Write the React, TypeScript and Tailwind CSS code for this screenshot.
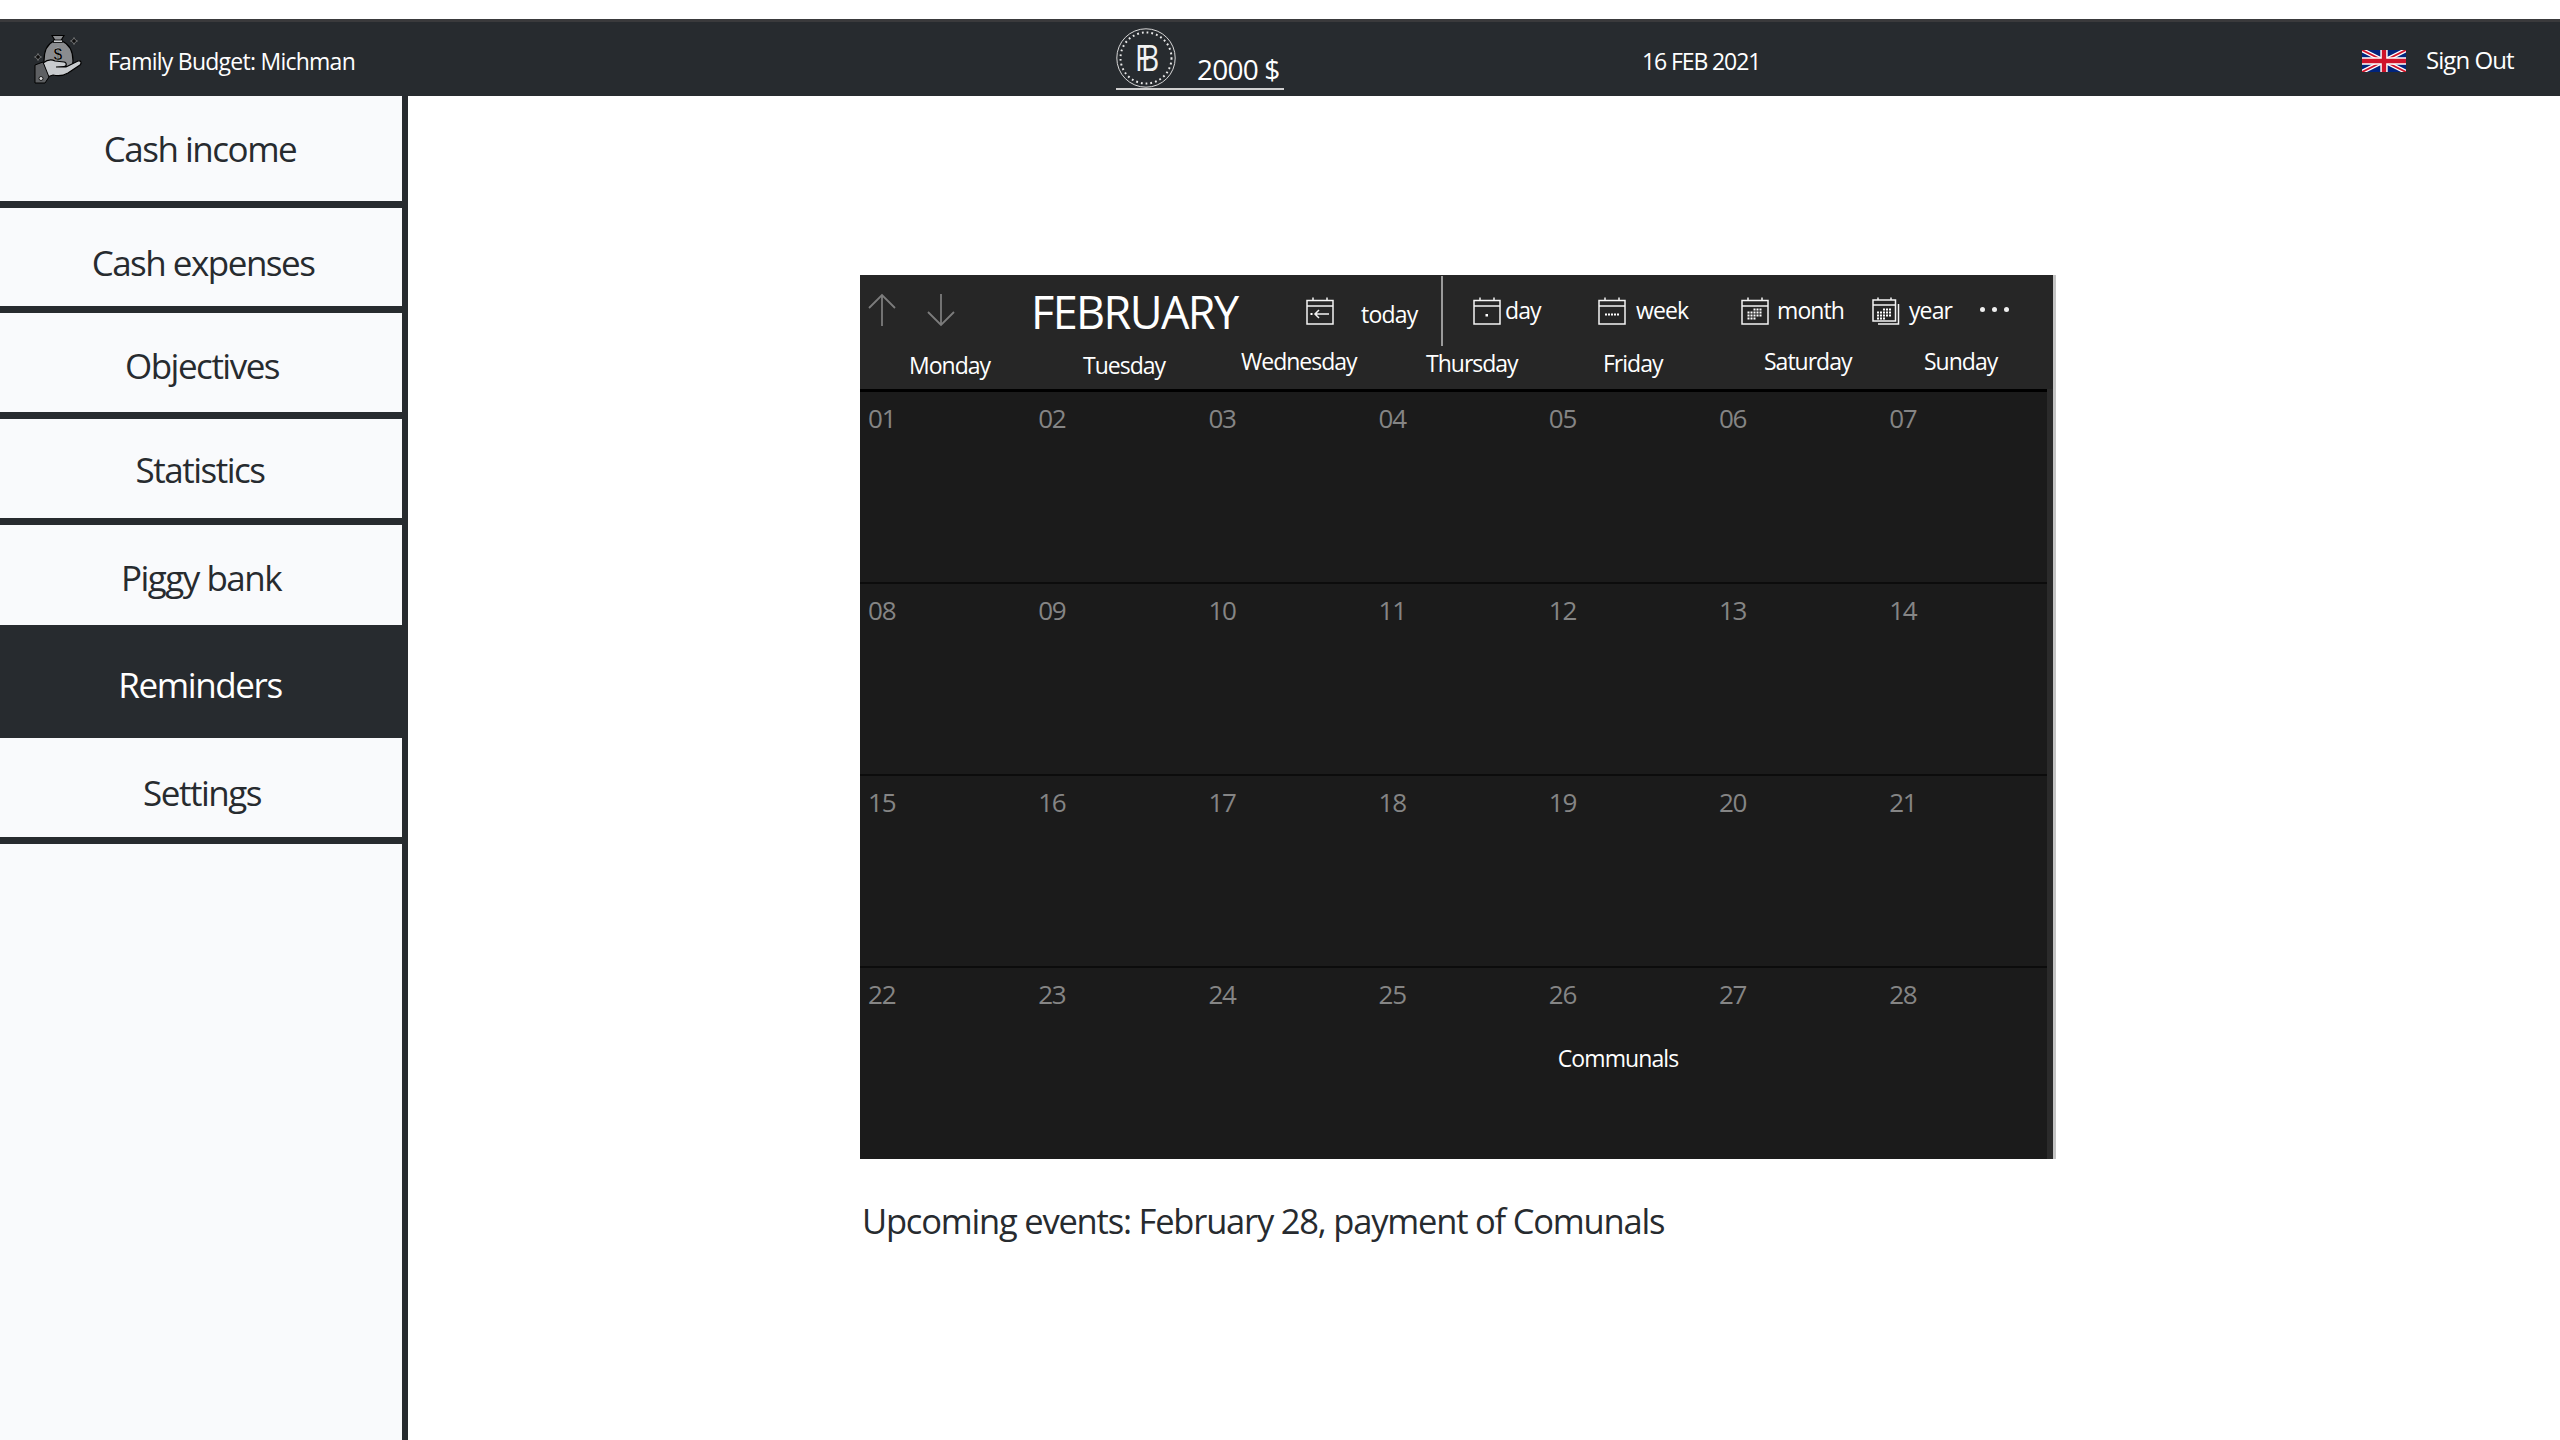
import React from "react";

const FONT = "font-['Open_Sans','Noto_Sans',sans-serif]";

function BagLogo() {
  return (
    <svg width="50" height="50" viewBox="0 0 50 50" className="shrink-0">
      <path d="M19 .5h12l-3 5h-6z" fill="#8a8c8f" stroke="#000" strokeWidth="1.200" />
      <path d="M21 6C12 10 11 20 11 26c0 5 3 8 7 8h16c4 0 6-4 6-8 0-7-2-16-11-20z" fill="#8a8c8f" stroke="#000" strokeWidth="1.200" />
      <rect x="20.500" y="5" width="9" height="2.500" fill="#c9cbce" stroke="#000" strokeWidth=".8" />
      <text x="25" y="25" textAnchor="middle" fontSize="16" fontWeight="700" fill="#000" stroke="#ddd" strokeWidth=".3" fontFamily="'Liberation Sans',sans-serif">$</text>
      <path d="M10 28C14 25 18 24 22 26L31 27C34 27.500 34 31.500 31 31.500L23 32 33 32 45 26C48 25 49 28 47 30L35 38C30 41 24 41 20 40L14 42Z" fill="#c8cbce" stroke="#000" strokeWidth="1.200" />
      <path d="M2 30L10 27 16 42 12 48H2Z" fill="#5e6063" stroke="#000" strokeWidth="1" />
      <circle cx="8" cy="43.500" r="2" fill="#ddd" stroke="#000" strokeWidth=".8" />
      <path d="M5 18.500l1.200 2.300 2.300 1.200-2.300 1.200L5 25.500l-1.200-2.300-2.300-1.200 2.300-1.200z" fill="#0d0d0d" stroke="#bbb" strokeWidth=".5" />
      <path d="M41 2.500l1.200 2.300 2.300 1.200-2.300 1.200L41 9.500l-1.200-2.300-2.300-1.200 2.300-1.200z" fill="#0d0d0d" stroke="#bbb" strokeWidth=".5" />
    </svg>
  );
}

function Coin() {
  return (
    <svg width="60" height="60" viewBox="0 0 60 60" className="shrink-0">
      <circle cx="30" cy="30" r="29.200" fill="none" stroke="#d8d8d8" strokeWidth="1" />
      <circle cx="30" cy="30" r="25.500" fill="none" stroke="#e8e8e8" strokeWidth="2" strokeDasharray="1.800 3" />
      <text transform="translate(19 43) scale(.78 1)" fontSize="36" letterSpacing="-11" fill="#f2f2f2" fontFamily="'Open Sans',sans-serif">FB</text>
    </svg>
  );
}

function Flag() {
  return (
    <svg width="44" height="22" viewBox="0 0 60 30" preserveAspectRatio="none" className="shrink-0">
      <rect width="60" height="30" fill="#00247d" />
      <path d="M0 0L60 30M60 0L0 30" stroke="#fff" strokeWidth="6" />
      <path d="M0 0L60 30M60 0L0 30" stroke="#cf142b" strokeWidth="2.500" />
      <path d="M30 0V30M0 15H60" stroke="#fff" strokeWidth="10" />
      <path d="M30 0V30M0 15H60" stroke="#cf142b" strokeWidth="6" />
    </svg>
  );
}

function CalIcon({ kind }: { kind: "today" | "day" | "week" | "month" | "year" }) {
  const dots: React.ReactNode[] = [];
  if (kind === "week") {
    for (let i = 0; i < 5; i++) dots.push(<rect key={i} x={7 + i * 3} y={16.500} width="2" height="2" fill="#fff" />);
  }
  if (kind === "month" || kind === "year") {
    const ox = kind === "month" ? 6.500 : 5;
    for (let r = 0; r < 4; r++)
      for (let c = 0; c < 5; c++) {
        if ((r === 0 && c < 2) || (r === 3 && c > 2)) continue;
        dots.push(<rect key={`${r}-${c}`} x={ox + c * 3} y={11.500 + r * 3} width="2" height="2" fill="#fff" />);
      }
  }
  return (
    <svg width="28" height="28" viewBox="0 0 28 28" fill="none" stroke="#f4f4f4" strokeWidth="1.500" className="shrink-0">
      {kind === "year" ? (
        <>
          <rect x="1" y="3" width="22.500" height="21" />
          <path d="M6 3V.500M19 3V.500M1 8h22.500" />
          <path d="M26.500 7v20H6" />
        </>
      ) : (
        <>
          <rect x="1" y="3.500" width="26" height="23.500" />
          <path d="M7 3.500V.500M21 3.500V.500M1 9h26" />
        </>
      )}
      {kind === "today" && (
        <>
          <path d="M9 17h14M13 13l-4 4 4 4" />
          <rect x="4.500" y="16" width="2" height="2" fill="#fff" stroke="none" />
        </>
      )}
      {kind === "day" && <rect x="12.500" y="17" width="2.500" height="2.500" fill="#fff" stroke="none" />}
      <g stroke="none">{dots}</g>
    </svg>
  );
}

const MENU = [
  { label: "Cash income", box: "h-[112px] pt-[2px] border-b-[7px]", text: "ml-[-2px]" },
  { label: "Cash expenses", box: "h-[105px] pt-[13px] border-b-[7px]", text: "ml-[4px]" },
  { label: "Objectives", box: "h-[106px] pt-[8px] border-b-[7px]", text: "ml-[2px]" },
  { label: "Statistics", box: "h-[106px] pt-[4px] border-b-[7px]", text: "ml-[-2px]" },
  { label: "Piggy bank", box: "h-[100px] pt-[6px]", text: "ml-0" },
  { label: "Settings", box: "h-[106px] pt-[11px] border-b-[7px]", text: "ml-[2px]" },
];

const DAYS = [
  { n: "Monday", box: "w-[174px] pt-[4px]" },
  { n: "Tuesday", box: "w-[158px] pt-[4px]" },
  { n: "Wednesday", box: "w-[185px] pt-0" },
  { n: "Thursday", box: "w-[177px] pt-[2px]" },
  { n: "Friday", box: "w-[161px] pt-[2px]" },
  { n: "Saturday", box: "w-[160px] pt-0" },
  { n: "Sunday", box: "w-[76px] pt-0" },
];

const WEEKS = [
  ["01", "02", "03", "04", "05", "06", "07"],
  ["08", "09", "10", "11", "12", "13", "14"],
  ["15", "16", "17", "18", "19", "20", "21"],
  ["22", "23", "24", "25", "26", "27", "28"],
];

function MenuItem({ m }: { m: (typeof MENU)[number] }) {
  return (
    <div className={`${m.box} flex items-center justify-center border-[#272b2f] bg-[#f9fafc]`}>
      <span className={`${m.text} text-[35px] tracking-[-1.5px] text-[#272b2f]`}>{m.label}</span>
    </div>
  );
}

export default function App() {
  return (
    <div className={`${FONT} h-screen w-full overflow-hidden bg-white pt-[19px]`}>
      <header className="flex h-[77px] items-center border-t-[3px] border-[#3a3a3c] bg-[#272b2f] text-white">
        <div className="flex w-[1116px] items-center pl-[33px]">
          <div className="mt-[2px]"><BagLogo /></div>
          <span className="ml-[25px] mt-[5px] text-[23px] tracking-[-0.75px]">Family Budget: Michman</span>
        </div>
        <div className="flex h-[62px] w-[168px] items-start border-b-2 border-[#cfcfcf]">
          <Coin />
          <span className="ml-[21px] mt-[22px] text-[28px] leading-[38px] tracking-[-0.8px]">2000 $</span>
        </div>
        <div className="w-[358px]" />
        <span className="mt-[5px] w-[720px] text-[23px] tracking-[-1.1px]">16 FEB 2021</span>
        <div className="mt-[2px] flex items-center">
          <div className="mt-[2px]"><Flag /></div>
          <span className="ml-[20px] text-[24px] tracking-[-0.95px]">Sign Out</span>
        </div>
      </header>

      <div className="flex h-[1344px]">
        <aside className="h-full w-[408px] shrink-0 border-r-[6px] border-[#272b2f] bg-[#f9fafc]">
          {MENU.slice(0, 5).map((m) => (
            <MenuItem key={m.label} m={m} />
          ))}
          <div className="-mr-[6px] flex h-[113px] items-center justify-center bg-[#272b2f] pr-[8px] pt-[8px]">
            <span className="text-[35px] tracking-[-1.4px] text-white">Reminders</span>
          </div>
          <MenuItem m={MENU[5]} />
        </aside>

        <main className="flex-1 pl-[452px] pt-[179px]">
          <section className="w-[1196px] border-r-[3px] border-[#c4c4c4] bg-[#262626] text-white">
            <div className="flex h-[70px] items-center pl-[8px]">
              <div className="w-[58px]">
                <svg width="28" height="34" viewBox="0 0 28 34" fill="none" stroke="#7c7c7c" strokeWidth="1.800">
                  <path d="M14 33V2M1 15L14 2l13 13" />
                </svg>
              </div>
              <div className="w-[105px]">
                <svg width="30" height="34" viewBox="0 0 30 34" fill="none" stroke="#7c7c7c" strokeWidth="1.800">
                  <path d="M15 1v31M2 19l13 13 13-13" />
                </svg>
              </div>
              <div className="w-[275px] pt-[4px] text-[45px] tracking-[-1.6px]">FEBRUARY</div>
              <div className="w-[55px] pt-[2px]"><CalIcon kind="today" /></div>
              <div className="w-[80px] pt-[9px] text-[23px] tracking-[-0.8px]">today</div>
              <div className="w-[32px] self-stretch">
                <div className="mt-[1px] h-[70px] w-[2px] bg-[#9a9a9a]" />
              </div>
              <div className="w-[32px] pt-[2px]"><CalIcon kind="day" /></div>
              <div className="w-[93px] text-[23px] tracking-[-0.9px]">day</div>
              <div className="w-[38px] pt-[2px]"><CalIcon kind="week" /></div>
              <div className="w-[105px] text-[23px] tracking-[-0.9px]">week</div>
              <div className="w-[36px] pt-[2px]"><CalIcon kind="month" /></div>
              <div className="w-[95px] text-[23px] tracking-[-0.9px]">month</div>
              <div className="w-[37px] pt-[2px]"><CalIcon kind="year" /></div>
              <div className="w-[71px] text-[23px] tracking-[-0.9px]">year</div>
              <div className="flex gap-[7px] pb-[1px]">
                <span className="size-[5px] rounded-full bg-[#eee]" />
                <span className="size-[5px] rounded-full bg-[#eee]" />
                <span className="size-[5px] rounded-full bg-[#eee]" />
              </div>
            </div>
            <div className="flex h-[44px] pl-[49px]">
              {DAYS.map((d) => (
                <div key={d.n} className={`${d.box} text-[23px] leading-[32px] tracking-[-1px]`}>{d.n}</div>
              ))}
            </div>
            <div className="flex">
              <div className="w-[1187px] border-t-[3px] border-black bg-[#1b1b1b]">
                {WEEKS.map((w, i) => (
                  <div key={i} className="grid h-[192px] grid-cols-[repeat(7,170.2px)] border-b-2 border-[#0c0c0c] pl-[8px] pt-[11px] last:h-[191px] last:border-b-0">
                    {w.map((d) => (
                      <div key={d} className="relative text-[26px] leading-[30px] tracking-[-1.2px] text-[#858585]">
                        {d}
                        {d === "26" && (
                          <div className="absolute left-[9px] top-[64px] text-[23px] tracking-[-0.9px] text-white">Communals</div>
                        )}
                      </div>
                    ))}
                  </div>
                ))}
              </div>
              <div className="w-[6px] bg-[#2b2b2b]" />
            </div>
          </section>
          <p className="ml-[2px] mt-[40px] text-[34.5px] leading-[44px] tracking-[-1.2px] text-[#272b2f]">
            Upcoming events: February 28, payment of Comunals
          </p>
        </main>
      </div>
    </div>
  );
}
